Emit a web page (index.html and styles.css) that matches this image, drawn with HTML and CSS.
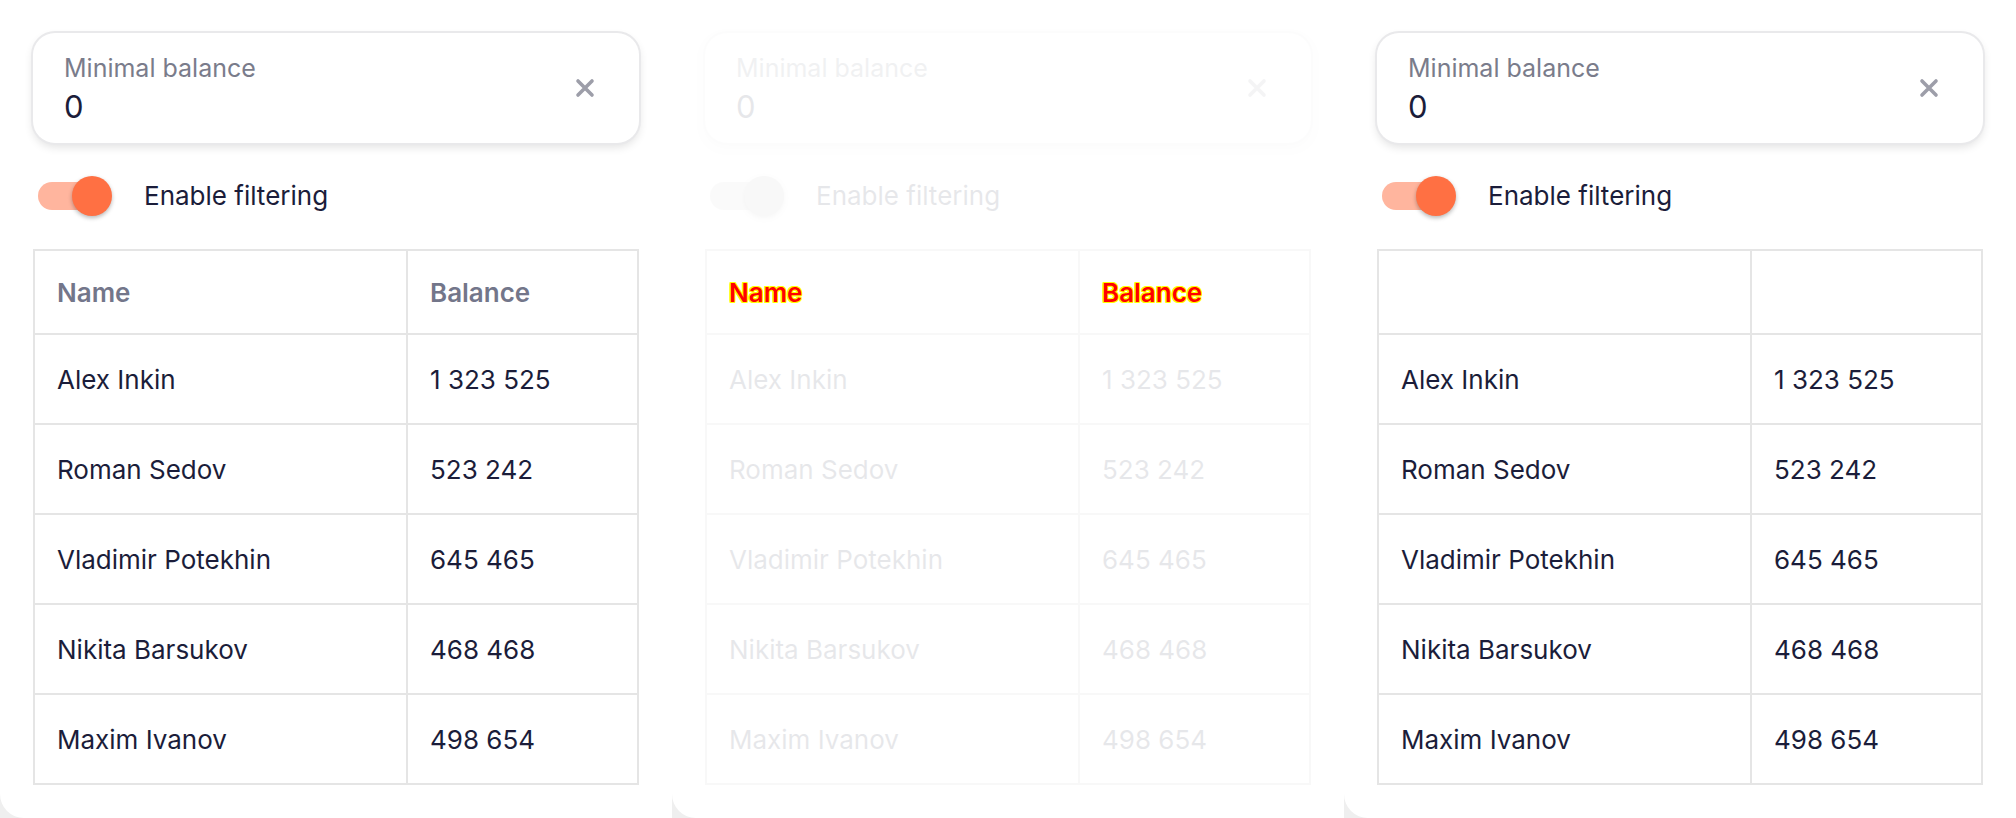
FILE: index.html
```html
<!DOCTYPE html>
<html lang="en">
<head>
<meta charset="utf-8">
<title>Filter table</title>
<link rel="stylesheet" href="styles.css">
</head>
<body>
<div class="board">
  <section class="card">
    <div class="field">
      <div class="field-text">
        <span class="field-label">Minimal balance</span>
        <span class="field-value">0</span>
      </div>
      <svg class="field-clear" viewBox="0 0 20 20" width="20" height="20"><path d="M3 3L17 17M17 3L3 17"/></svg>
    </div>
    <div class="toggle-row">
      <span class="toggle"><span class="toggle-track"></span><span class="toggle-knob"></span></span>
      <span class="toggle-label">Enable filtering</span>
    </div>
    <div class="table">
      <div class="cell cell-head"><span class="head-text">Name</span></div>
      <div class="cell cell-head"><span class="head-text">Balance</span></div>
      <div class="cell"><span class="cell-text">Alex Inkin</span></div>
      <div class="cell"><span class="cell-text">1 323 525</span></div>
      <div class="cell"><span class="cell-text">Roman Sedov</span></div>
      <div class="cell"><span class="cell-text">523 242</span></div>
      <div class="cell"><span class="cell-text">Vladimir Potekhin</span></div>
      <div class="cell"><span class="cell-text">645 465</span></div>
      <div class="cell"><span class="cell-text">Nikita Barsukov</span></div>
      <div class="cell"><span class="cell-text">468 468</span></div>
      <div class="cell"><span class="cell-text">Maxim Ivanov</span></div>
      <div class="cell"><span class="cell-text">498 654</span></div>
    </div>
  </section>

  <section class="card card-ghost">
    <div class="field">
      <div class="field-text">
        <span class="field-label">Minimal balance</span>
        <span class="field-value">0</span>
      </div>
      <svg class="field-clear" viewBox="0 0 20 20" width="20" height="20"><path d="M3 3L17 17M17 3L3 17"/></svg>
    </div>
    <div class="toggle-row">
      <span class="toggle"><span class="toggle-track"></span><span class="toggle-knob"></span></span>
      <span class="toggle-label">Enable filtering</span>
    </div>
    <div class="table">
      <div class="cell cell-head"><span class="head-text head-mark">Name</span></div>
      <div class="cell cell-head"><span class="head-text head-mark">Balance</span></div>
      <div class="cell"><span class="cell-text">Alex Inkin</span></div>
      <div class="cell"><span class="cell-text">1 323 525</span></div>
      <div class="cell"><span class="cell-text">Roman Sedov</span></div>
      <div class="cell"><span class="cell-text">523 242</span></div>
      <div class="cell"><span class="cell-text">Vladimir Potekhin</span></div>
      <div class="cell"><span class="cell-text">645 465</span></div>
      <div class="cell"><span class="cell-text">Nikita Barsukov</span></div>
      <div class="cell"><span class="cell-text">468 468</span></div>
      <div class="cell"><span class="cell-text">Maxim Ivanov</span></div>
      <div class="cell"><span class="cell-text">498 654</span></div>
    </div>
  </section>

  <section class="card">
    <div class="field">
      <div class="field-text">
        <span class="field-label">Minimal balance</span>
        <span class="field-value">0</span>
      </div>
      <svg class="field-clear" viewBox="0 0 20 20" width="20" height="20"><path d="M3 3L17 17M17 3L3 17"/></svg>
    </div>
    <div class="toggle-row">
      <span class="toggle"><span class="toggle-track"></span><span class="toggle-knob"></span></span>
      <span class="toggle-label">Enable filtering</span>
    </div>
    <div class="table">
      <div class="cell cell-head"></div>
      <div class="cell cell-head"></div>
      <div class="cell"><span class="cell-text">Alex Inkin</span></div>
      <div class="cell"><span class="cell-text">1 323 525</span></div>
      <div class="cell"><span class="cell-text">Roman Sedov</span></div>
      <div class="cell"><span class="cell-text">523 242</span></div>
      <div class="cell"><span class="cell-text">Vladimir Potekhin</span></div>
      <div class="cell"><span class="cell-text">645 465</span></div>
      <div class="cell"><span class="cell-text">Nikita Barsukov</span></div>
      <div class="cell"><span class="cell-text">468 468</span></div>
      <div class="cell"><span class="cell-text">Maxim Ivanov</span></div>
      <div class="cell"><span class="cell-text">498 654</span></div>
    </div>
  </section>
</div>
</body>
</html>
```
FILE: styles.css
```css
* { box-sizing: border-box; }

html, body {
  margin: 0;
  padding: 0;
  background: #efefef;
  font-family: Inter, "Liberation Sans", sans-serif;
  color: #1b1d3a;
}

.board {
  display: grid;
  grid-template-columns: 672px 672px 672px;
  height: 818px;
  overflow: hidden;
}

.card {
  background: #ffffff;
  height: 818px;
  border-bottom-left-radius: 24px;
  padding: 33px 33px 0 33px;
  display: flex;
  flex-direction: column;
  gap: 33px;
}

/* text field */
.field {
  height: 110px;
  border-radius: 22px;
  background: #fff;
  box-shadow: 0 0 0 2px #e9e9eb, 0 4px 10px rgba(0, 0, 0, 0.12);
  display: flex;
  align-items: center;
  padding: 0 44px 0 31px;
}

.field-text {
  flex: 1;
  display: flex;
  flex-direction: column;
}

.field-label {
  font-size: 25px;
  line-height: 32px;
  color: #7a7c8b;
}

.field-value {
  font-size: 31px;
  line-height: 36px;
  margin-top: 5px;
  color: #1b1d3a;
}

.field-clear {
  fill: none;
  stroke: #9d9ea9;
  stroke-width: 3.6;
  stroke-linecap: round;
}

/* toggle */
.toggle-row {
  display: flex;
  align-items: center;
  gap: 31px;
  height: 40px;
}

.toggle {
  position: relative;
  width: 80px;
  height: 40px;
  flex: none;
}

.toggle-track {
  position: absolute;
  left: 5px;
  top: 6px;
  width: 62px;
  height: 28px;
  border-radius: 14px;
  background: #ffb59e;
}

.toggle-knob {
  position: absolute;
  left: 39px;
  top: 0;
  width: 40px;
  height: 40px;
  border-radius: 50%;
  background: #ff7043;
  box-shadow: 0 2px 4px rgba(0, 0, 0, 0.28);
}

.toggle-label {
  font-size: 26px;
  line-height: 36px;
  color: #1b1d3a;
}

/* table */
.table {
  display: grid;
  grid-template-columns: 373px 1fr;
  grid-template-rows: 84px repeat(5, 90px);
  border-top: 2px solid #e5e5e5;
  border-left: 2px solid #e5e5e5;
}

.cell {
  border-right: 2px solid #e5e5e5;
  border-bottom: 2px solid #e5e5e5;
  display: flex;
  align-items: center;
  padding-left: 22px;
}

.cell-text {
  font-size: 26px;
  color: #1b1d3a;
}

.head-text {
  font-size: 26px;
  font-weight: 600;
  color: #73768a;
}

/* faded panel */
.card-ghost .field,
.card-ghost .toggle-row,
.card-ghost .cell-text {
  opacity: 0.1;
}

.card-ghost .toggle-track { background: #d8d8d8; }
.card-ghost .toggle-knob { background: #bdbdbd; }

.card-ghost .table,
.card-ghost .cell {
  border-color: #f8f8f8;
}

.head-mark {
  color: #ff0000;
  text-shadow: 1px 0 0 #ffff00, -1px 0 0 #ffff00, 0 1px 0 #ffff00, 0 -1px 0 #ffff00,
    1px 1px 0 #ffff00, -1px -1px 0 #ffff00, 1px -1px 0 #ffff00, -1px 1px 0 #ffff00;
}
```
